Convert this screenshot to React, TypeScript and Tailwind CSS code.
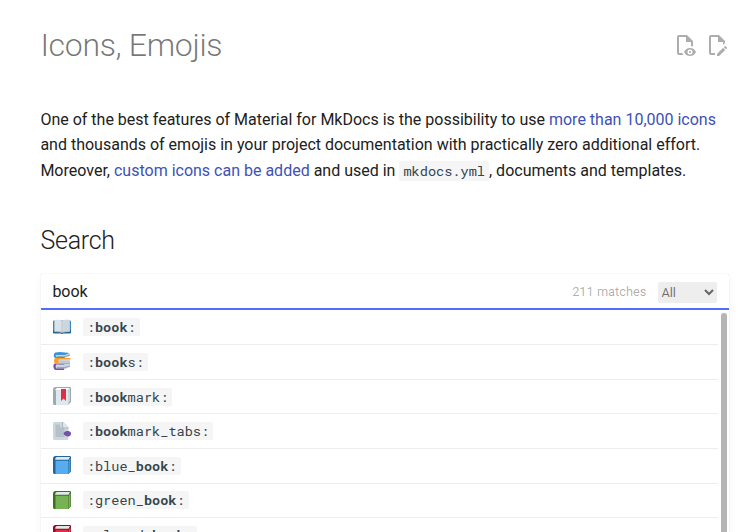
import React from 'react';

const Book = ({ dark, light, side }: { dark: string; light: string; side: string }) => (
  <>
    <path fill={dark} d="M5 0h28c2 0 3 1 3 3v26c0 2-1 3-2 4l-3 3H4c-3 0-4-1-4-4V5c0-3 2-5 5-5z" />
    <path fill={side} d="M32 8l3-3v24c0 2-1 3-3 5z" />
    <path fill="#e1e8ed" d="M8 2h26l-3 5.500H5C3 7 5 3 8 2z" />
    <path fill={light} d="M5 9.500h24c1 0 2 .5 2 2V34c0 1-.5 2-2 2H5z" />
  </>
);

const emojis: Record<string, React.ReactNode> = {
  open: (
    <>
      <path fill="#3b88c3" d="M0 7c0-1 1-2 2-2h32c1 0 2 1 2 2v20c0 2-1 3-2 3H2c-1 0-2-1-2-3z" />
      <path fill="#226699" d="M0 25h36v3c0 2-1 3-2 3H21l-3 1-3-1H2c-1 0-2-1-2-3z" />
      <path fill="#99aab5" d="M3 6h30v22c-6 0-11 0-15 2-4-2-9-2-15-2z" />
      <path fill="#dbe3e9" d="M3 4c6-1 12-1 15 2v22c-4-2-9-2-15-1zM33 4c-6-1-12-1-15 2v22c4-2 9-2 15-1z" />
      <path fill="#ccd6dd" d="M20 5c4-2 9-2 13-1v23c-5-1-9-1-13 .5z" />
      <path fill="#b4c1ca" d="M17 5.500h2V29h-2z" />
    </>
  ),
  stack: (
    <>
      <path fill="#ccd6dd" d="M6 25l28-2v7l-12 5H6z" />
      <path fill="#99aab5" d="M8 30h14l12-3v2l-12 4H8z" />
      <path fill="#7450a8" d="M4 23l16-1 3 3H7c-2 1-2 7 0 8h15v3H5c-5-1-6-12-1-13z" />
      <path fill="#ccd6dd" d="M10 15h24v8H10z" />
      <path fill="#aab8c2" d="M12 19h22v1.500H12z" />
      <path fill="#ff9d1e" d="M5 12h30v3H12c-2 1-2 6 0 7h22v2H6c-5-1-5-11-1-12z" />
      <path fill="#ccd6dd" d="M6 4h28v4l-11 4H6z" />
      <path fill="#99aab5" d="M8 8h15l11-3v2l-11 4H8z" />
      <path fill="#3b94d9" d="M5 1l9-1 20 2-11 4H7C5 7 5 9 7 10h16v2H5C0 11 1 2 5 1z" />
    </>
  ),
  bookmark: (
    <>
      <path fill="#99aab5" d="M5 0h28c2 0 3 1 3 3v25c0 2-1 3-2 4l-4 4H4c-3 0-4-1-4-4V5c0-3 2-5 5-5z" />
      <path fill="#ccd6dd" d="M31 5l3-3v26l-3 4z" />
      <path fill="#fff" d="M8 2h25l-3 5H5c-1-2 1-4 3-5z" />
      <path fill="#e1e8ed" d="M6 7h22c2 0 3 1 3 3v23c0 2-1 3-3 3H6z" />
      <path fill="#dd2e44" d="M16 4h10v24l-5-5-5 5z" />
    </>
  ),
  tabs: (
    <>
      <path fill="#ccd6dd" d="M4 0h16l11 11v21c0 3-1 4-4 4H4c-3 0-4-1-4-4V4c0-3 1-4 4-4z" />
      <path fill="#b4c1ca" d="M5 5h9v6h9v19H5z" />
      <path fill="#aab8c2" d="M18 0v9c0 3 1 4 4 4h9v-2L20 0z" />
      <path fill="#e1e8ed" d="M20 0v8c0 2 1 3 3 3h8z" />
      <path fill="#7450a8" d="M21 23c1-3 4-5 7-5s8 1 8 5-3 6-6 6-8-2-9-6z" />
    </>
  ),
  blue: <Book dark="#226699" light="#55acee" side="#5d90ba" />,
  green: <Book dark="#3e721d" light="#77b255" side="#83a877" />,
  red: <Book dark="#a0041e" light="#dd2e44" side="#b6576a" />,
};

const rows = [
  { icon: 'open', pre: ':', post: ':' },
  { icon: 'stack', pre: ':', post: 's:' },
  { icon: 'bookmark', pre: ':', post: 'mark:' },
  { icon: 'tabs', pre: ':', post: 'mark_tabs:' },
  { icon: 'blue', pre: ':blue_', post: ':' },
  { icon: 'green', pre: ':green_', post: ':' },
  { icon: 'red', pre: ':closed_', post: ':' },
];

const mono = "font-['Roboto_Mono','DejaVu_Sans_Mono',monospace] text-[13.6px] text-[#36464e] bg-[#f5f5f5] rounded-[2px]";

export default function App() {
  return (
    <main className="h-[532px] w-[751px] overflow-hidden bg-white pl-[40.4px] pr-[22px] pt-[24px] font-[Roboto,sans-serif] text-[16px] leading-[25.6px] text-[#212121]">
      <header className="flex h-[42px] justify-between">
        <h1 className="text-[32px] font-light leading-[42px] tracking-[-0.32px] text-black/54">Icons, Emojis</h1>
        <div className="flex gap-2 pt-[9px] text-black/32">
          <svg className="size-6" viewBox="0 0 24 24" fill="currentColor">
            <path d="M17 18c.56 0 1 .44 1 1s-.44 1-1 1-1-.44-1-1 .44-1 1-1m0-3c-2.730 0-5.060 1.660-6 4 .94 2.340 3.270 4 6 4s5.060-1.660 6-4c-.94-2.340-3.270-4-6-4m0 6.500a2.500 2.500 0 0 1-2.500-2.500 2.500 2.500 0 0 1 2.500-2.500 2.500 2.500 0 0 1 2.500 2.500 2.500 2.500 0 0 1-2.500 2.500M9.270 20H6V4h7v5h5v4.070c.7.08 1.360.25 2 .49V8l-6-6H6a2 2 0 0 0-2 2v16a2 2 0 0 0 2 2h4.500a8.150 8.150 0 0 1-1.230-2" />
          </svg>
          <svg className="size-6" viewBox="0 0 24 24" fill="currentColor">
            <path d="M10 20H6V4h7v5h5v3.100l2-2V8l-6-6H6c-1.100 0-2 .9-2 2v16c0 1.100.9 2 2 2h4v-2m10.200-7c.1 0 .3.100.4.200l1.300 1.300c.2.200.2.600 0 .8l-1 1-2.100-2.100 1-1c.1-.1.200-.2.400-.2m0 3.900L14.100 23H12v-2.100l6.100-6.100 2.100 2.100Z" />
          </svg>
        </div>
      </header>

      <p className="mt-[40.6px] whitespace-nowrap">
        One of the best features of Material for MkDocs is the possibility to use{' '}
        <a className="text-[#4051b5]">more than 10,000 icons</a>
        <br />
        and thousands of emojis in your project documentation with practically zero additional effort.
        <br />
        Moreover, <a className="text-[#4051b5]">custom icons can be added</a> and used in{' '}
        <code className={`${mono} px-1 py-px leading-none`}>mkdocs.yml</code>, documents and templates.
      </p>

      <h2 className="mt-[39.8px] text-[25px] font-light leading-[35px] tracking-[-0.25px]">Search</h2>

      <section className="ml-[0.4px] mt-[16px] h-[300px] rounded-[2px] bg-white shadow-[0_4px_10px_#0000000d,0_0_1px_#00000033]">
        <div className="flex h-[35.800px] items-center border-b-2 border-[#526cfe] pl-[11.6px] pr-3">
          <span className="grow pt-[2px]">book</span>
          <span className="mr-[11.6px] pt-[2px] text-[12.8px] text-black/32">211 matches</span>
          <div className="mt-[2px] flex h-[21px] w-[59px] items-center justify-between rounded-[2px] bg-[#eee] pl-[3.4px] pr-[3px] text-[12.8px] text-black/54">
            <span className="pt-px">All</span>
            <svg className="h-[7px] w-[10px]" viewBox="0 0 10 7" fill="none" stroke="#666" strokeWidth="2">
              <path d="M1 1l4 4 4-4" />
            </svg>
          </div>
        </div>
        <div className="flex justify-between pr-[2px]">
          <ul className="w-[677px] pt-[0.6px]">
            {rows.map((r) => (
              <li key={r.icon} className="flex h-[34.600px] items-center border-b border-black/7 pl-3">
                <svg className="mb-px mr-3 size-[18px]" viewBox="0 0 36 36">{emojis[r.icon]}</svg>
                <code className={`${mono} h-[18px] whitespace-pre px-1 leading-[18px]`}>
                  {r.pre}<b>book</b>{r.post}
                </code>
              </li>
            ))}
          </ul>
          <div className="mt-[3px] h-[240px] w-[6px] rounded-[3px] bg-[#b5b5b5]" />
        </div>
      </section>
    </main>
  );
}
